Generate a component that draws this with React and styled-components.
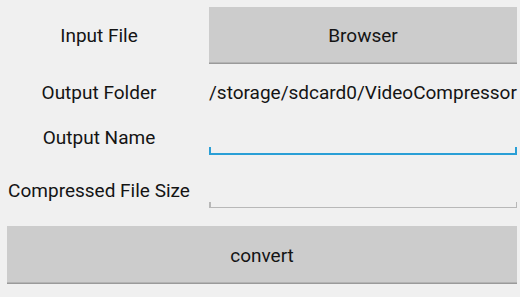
import React from "react";
import styled, { createGlobalStyle } from "styled-components";

const GlobalStyle = createGlobalStyle`
  html, body {
    margin: 0;
    padding: 0;
    background: #f0f0f0;
  }
  body {
    font-family: Roboto, "Open Sans", sans-serif;
    color: #141414;
  }
`;

const Screen = styled.div`
  width: 520px;
  height: 297px;
  box-sizing: border-box;
  padding: 7px 3px 0 7px;
  display: flex;
  flex-direction: column;
  overflow: hidden;
`;

const Row = styled.div`
  display: grid;
  grid-template-columns: 184px 1fr;
  column-gap: 18px;
  align-items: center;
  height: ${(p) => p.h}px;
  margin-top: ${(p) => p.mt || 0}px;
`;

const Label = styled.div`
  text-align: center;
  font-size: 19px;
  white-space: nowrap;
`;

const Value = styled.div`
  font-size: 19px;
  white-space: nowrap;
`;

const Button = styled.button`
  border: none;
  margin: 0;
  padding: 0;
  width: 100%;
  height: 100%;
  background: #cccccc;
  box-shadow: inset 0 -1.5px 0 #9a9a9a;
  font-family: inherit;
  font-size: 19px;
  color: #141414;
`;

const WideButton = styled(Button)`
  height: 58px;
  margin-top: ${(p) => p.mt}px;
`;

const Field = styled.div`
  position: relative;
  align-self: stretch;
  border-bottom: ${(p) => (p.focused ? "2px solid #2a9fd6" : "1.5px solid #b8b8b8")};
  box-sizing: border-box;

  &::before,
  &::after {
    content: "";
    position: absolute;
    bottom: 0;
    width: ${(p) => (p.focused ? 2 : 1.5)}px;
    height: ${(p) => (p.focused ? 6 : 5)}px;
    background: ${(p) => (p.focused ? "#2a9fd6" : "#b8b8b8")};
  }
  &::before {
    left: 0;
  }
  &::after {
    right: 0;
  }
`;

export default function App() {
  return (
    <>
      <GlobalStyle />
      <Screen>
        <Row h={57}>
          <Label>Input File</Label>
          <Button>Browser</Button>
        </Row>
        <Row h={56}>
          <Label>Output Folder</Label>
          <Value>/storage/sdcard0/VideoCompressor</Value>
        </Row>
        <Row h={35}>
          <Label>Output Name</Label>
          <Field focused />
        </Row>
        <Row h={36} mt={17}>
          <Label>Compressed File Size</Label>
          <Field />
        </Row>
        <WideButton mt={18}>convert</WideButton>
      </Screen>
    </>
  );
}
